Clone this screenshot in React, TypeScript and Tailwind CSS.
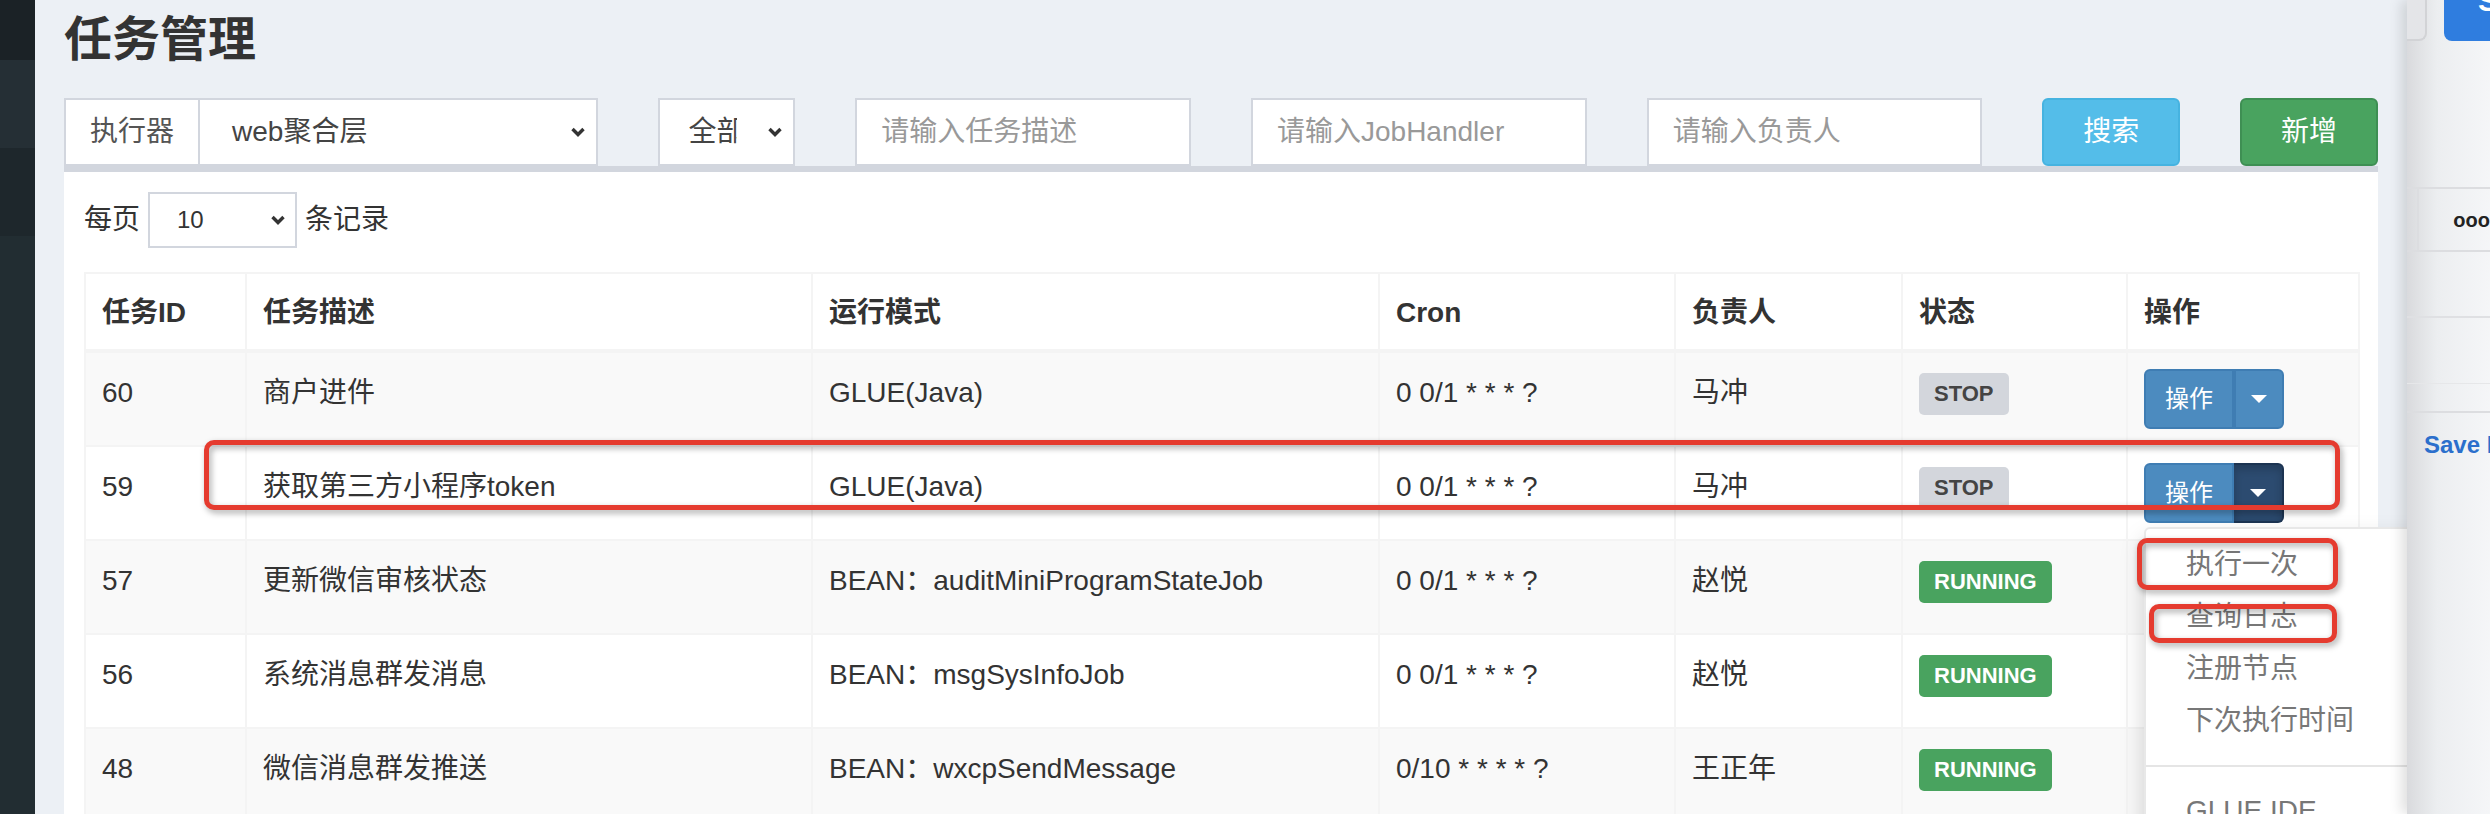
import React from "react"

type Job = {
  id: number
  desc: string
  mode: string
  cron: string
  owner: string
  status: "STOP" | "RUNNING"
}

const jobs: Job[] = [
  { id: 60, desc: "商户进件", mode: "GLUE(Java)", cron: "0 0/1 * * * ?", owner: "马冲", status: "STOP" },
  { id: 59, desc: "获取第三方小程序token", mode: "GLUE(Java)", cron: "0 0/1 * * * ?", owner: "马冲", status: "STOP" },
  { id: 57, desc: "更新微信审核状态", mode: "BEAN：auditMiniProgramStateJob", cron: "0 0/1 * * * ?", owner: "赵悦", status: "RUNNING" },
  { id: 56, desc: "系统消息群发消息", mode: "BEAN：msgSysInfoJob", cron: "0 0/1 * * * ?", owner: "赵悦", status: "RUNNING" },
  { id: 48, desc: "微信消息群发推送", mode: "BEAN：wxcpSendMessage", cron: "0/10 * * * * ?", owner: "王正年", status: "RUNNING" },
]

const menuItems = ["执行一次", "查询日志", "注册节点", "下次执行时间"]

function Chevron() {
  return (
    <svg width="16" height="12" viewBox="0 0 16 12" className="shrink-0">
      <path d="M2.5 3 8 8.5 13.5 3" fill="none" stroke="#333" strokeWidth="3.4" />
    </svg>
  )
}

function Caret() {
  return (
    <svg width="16" height="8" viewBox="0 0 16 8">
      <path d="M0 0h16L8 8z" fill="#fff" />
    </svg>
  )
}

function OpsButton({ open }: { open?: boolean }) {
  return (
    <div className="relative flex h-[60px] w-fit text-[24px] text-white">
      <div className="flex items-center rounded-l-[6px] border-2 border-[#3f7db3] bg-[#4c8bbf] px-[19px]">操作</div>
      <div
        className={
          open
            ? "flex w-[50px] items-center justify-center rounded-r-[6px] border-2 border-l-0 border-[#1c3452] bg-[#2c4b70] shadow-[inset_0_4px_8px_rgba(0,0,0,0.2)]"
            : "flex w-[50px] items-center justify-center rounded-r-[6px] border-2 border-l-[#3f7db3] border-[#3f7db3] bg-[#4c8bbf]"
        }
      >
        <Caret />
      </div>
      {open && (
        <div className="absolute left-0 top-full z-10 mt-[4px] w-[320px] rounded-[6px] border-2 border-[#e8e8e8] bg-white py-[10px] shadow-[0_12px_24px_rgba(0,0,0,0.175)]">
          {menuItems.map((m) => (
            <div key={m} className="whitespace-nowrap px-[40px] py-[6px] text-[28px] leading-[40px] text-[#777]">
              {m}
            </div>
          ))}
          <div className="my-[18px] h-[2px] bg-[#e5e5e5]" />
          <div className="whitespace-nowrap px-[40px] py-[6px] text-[28px] leading-[40px] text-[#777]">GLUE IDE</div>
        </div>
      )}
    </div>
  )
}

function StatusLabel({ status }: { status: Job["status"] }) {
  return (
    <span
      className={
        status === "STOP"
          ? "block w-fit rounded-[5px] bg-[#d3d6dc] px-[15px] py-[10px] text-[22px] font-bold leading-[22px] text-[#444]"
          : "block w-fit rounded-[5px] bg-[#49a35f] px-[15px] py-[10px] text-[22px] font-bold leading-[22px] text-white"
      }
    >
      {status}
    </span>
  )
}

export default function App() {
  const cell = "border-2 border-[#f4f4f4] px-[16px] pt-[20px] pb-[12px] align-top leading-[40px]"
  const opsCell = "border-2 border-[#f4f4f4] px-[16px] py-[16px] align-top leading-[40px]"
  const head = "border-2 border-b-4 border-[#f4f4f4] px-[16px] pt-[19px] pb-[16px] text-left align-top font-bold leading-[40px]"

  return (
    <div className="flex h-[814px] w-[2490px] overflow-hidden font-['Liberation_Sans','Noto_Sans_CJK_SC',sans-serif] text-[28px] text-[#333]">
      {/* sidebar edge */}
      <aside className="flex w-[35px] shrink-0 flex-col bg-[#222d32]">
        <div className="h-[60px] bg-[#1b2226]" />
        <div className="h-[88px] bg-[#252f35]" />
        <div className="h-[88px] bg-[#1e272c]" />
      </aside>

      <main className="relative min-w-0 flex-1 overflow-hidden bg-[#ecf0f5]">
        <h1 className="px-[29px] pt-[16px] text-[48px] font-semibold leading-[48px] text-[#333]">任务管理</h1>

        <div className="mt-[34px] grid grid-cols-12 gap-x-[60px] px-[29px]">
          <div className="col-span-3 flex h-[68px]">
            <div className="flex items-center border-2 border-[#d2d6de] bg-white px-[24px] text-[#555]">执行器</div>
            <div className="flex flex-1 items-center border-2 border-l-0 border-[#d2d6de] bg-white pl-[32px] pr-[10px] text-[#444]">
              <span className="flex-1">web聚合层</span>
              <Chevron />
            </div>
          </div>
          <div className="col-span-1 flex h-[68px] items-center border-2 border-[#d2d6de] bg-white pl-[29px] pr-[10px] text-[#444]">
            <span className="w-[48px] overflow-hidden whitespace-nowrap">全部</span>
            <span className="flex-1" />
            <Chevron />
          </div>
          <input
            readOnly
            placeholder="请输入任务描述"
            className="col-span-2 h-[68px] min-w-0 border-2 border-[#d2d6de] bg-white px-[24px] outline-none placeholder:text-[#999]"
          />
          <input
            readOnly
            placeholder="请输入JobHandler"
            className="col-span-2 h-[68px] min-w-0 border-2 border-[#d2d6de] bg-white px-[24px] outline-none placeholder:text-[#999]"
          />
          <input
            readOnly
            placeholder="请输入负责人"
            className="col-span-2 h-[68px] min-w-0 border-2 border-[#d2d6de] bg-white px-[24px] outline-none placeholder:text-[#999]"
          />
          <button className="col-span-1 h-[68px] rounded-[6px] border-2 border-[#46b3e0] bg-[#54bde9] text-white">搜索</button>
          <button className="col-span-1 h-[68px] rounded-[6px] border-2 border-[#3e8f53] bg-[#49a35f] text-white">新增</button>
        </div>

        <div className="mx-[29px] border-t-[6px] border-[#d2d6de] bg-white px-[20px] pt-[20px] pb-[40px]">
          <div className="flex h-[56px] items-center">
            <span>每页</span>
            <div className="ml-[8px] flex h-[56px] w-[149px] items-center border-2 border-[#d2d6de] pl-[27px] pr-[9px]">
              <span className="flex-1 text-[24px]">10</span>
              <Chevron />
            </div>
            <span className="ml-[8px]">条记录</span>
          </div>

          <table className="mt-[24px] w-[2274px] table-fixed border-collapse border-2 border-[#f4f4f4]">
            <colgroup>
              <col className="w-[161px]" />
              <col className="w-[566px]" />
              <col className="w-[567px]" />
              <col className="w-[296px]" />
              <col className="w-[227px]" />
              <col className="w-[225px]" />
              <col className="w-[232px]" />
            </colgroup>
            <thead>
              <tr className="bg-white">
                <th className={head}>任务ID</th>
                <th className={head}>任务描述</th>
                <th className={head}>运行模式</th>
                <th className={head}>Cron</th>
                <th className={head}>负责人</th>
                <th className={head}>状态</th>
                <th className={head}>操作</th>
              </tr>
            </thead>
            <tbody>
              {jobs.map((j, i) => (
                <tr key={j.id} className={i % 2 === 0 ? "bg-[#f9f9f9]" : "bg-white"}>
                  <td className={cell}>{j.id}</td>
                  <td className={cell}>{j.desc}</td>
                  <td className={cell}>{j.mode}</td>
                  <td className={cell}>{j.cron}</td>
                  <td className={cell}>{j.owner}</td>
                  <td className={cell}>
                    <StatusLabel status={j.status} />
                  </td>
                  <td className={opsCell}>
                    <OpsButton open={j.id === 59} />
                  </td>
                </tr>
              ))}
            </tbody>
          </table>
        </div>

        {/* red annotation marks drawn over the screenshot */}
        <div className="pointer-events-none absolute left-[169px] top-[440px] z-30 h-[70px] w-[2136px] rounded-[10px] border-[5px] border-[#e53b2f] drop-shadow-[2px_3px_3px_rgba(0,0,0,0.35)]" />
        <div className="pointer-events-none absolute left-[2102px] top-[538px] z-30 h-[52px] w-[201px] rounded-[10px] border-[5px] border-[#e53b2f] drop-shadow-[2px_3px_3px_rgba(0,0,0,0.35)]" />
        <div className="pointer-events-none absolute left-[2114px] top-[604px] z-30 h-[39px] w-[188px] rounded-[10px] border-[5px] border-[#e53b2f] drop-shadow-[2px_3px_3px_rgba(0,0,0,0.35)]" />
      </main>

      {/* neighbouring window edge */}
      <div className="relative z-20 flex w-[83px] shrink-0 flex-col overflow-hidden bg-[linear-gradient(to_right,#d9dadd,#eceef0_30px,#f5f6f8)] shadow-[-6px_0_12px_rgba(0,0,0,0.12)]">
        <div className="flex h-[41px] shrink-0">
          <div className="w-[20px] rounded-br-[8px] border-b-2 border-r-2 border-[#d2d3d6] bg-[#e4e5e8]" />
          <div className="ml-[17px] flex-1 overflow-hidden rounded-bl-[8px] bg-[#2f7ddf] pl-[34px] text-[30px] font-bold leading-[30px] text-white">
            <span className="-mt-[14px] block whitespace-nowrap">Save</span>
          </div>
        </div>
        <div className="h-[146px] shrink-0" />
        <div className="flex h-[65px] shrink-0 border-y-2 border-[#dcdde0]">
          <div className="w-[35px] border-r-2 border-[#dcdde0]" />
          <div className="flex flex-1 items-center whitespace-nowrap pl-[34px] text-[20px] font-semibold text-[#222]">ooo</div>
        </div>
        <div className="h-[66px] shrink-0 border-b-2 border-[#dfe0e3]" />
        <div className="h-[66px] shrink-0 border-b border-[#e6e7e9]" />
        <div className="h-[29px] shrink-0 border-b-2 border-[#dcdde0]" />
        <div className="whitespace-nowrap pl-[17px] pt-[18px] text-[24px] font-bold leading-[28px] text-[#2b6fcc]">Save Info</div>
      </div>
    </div>
  )
}
